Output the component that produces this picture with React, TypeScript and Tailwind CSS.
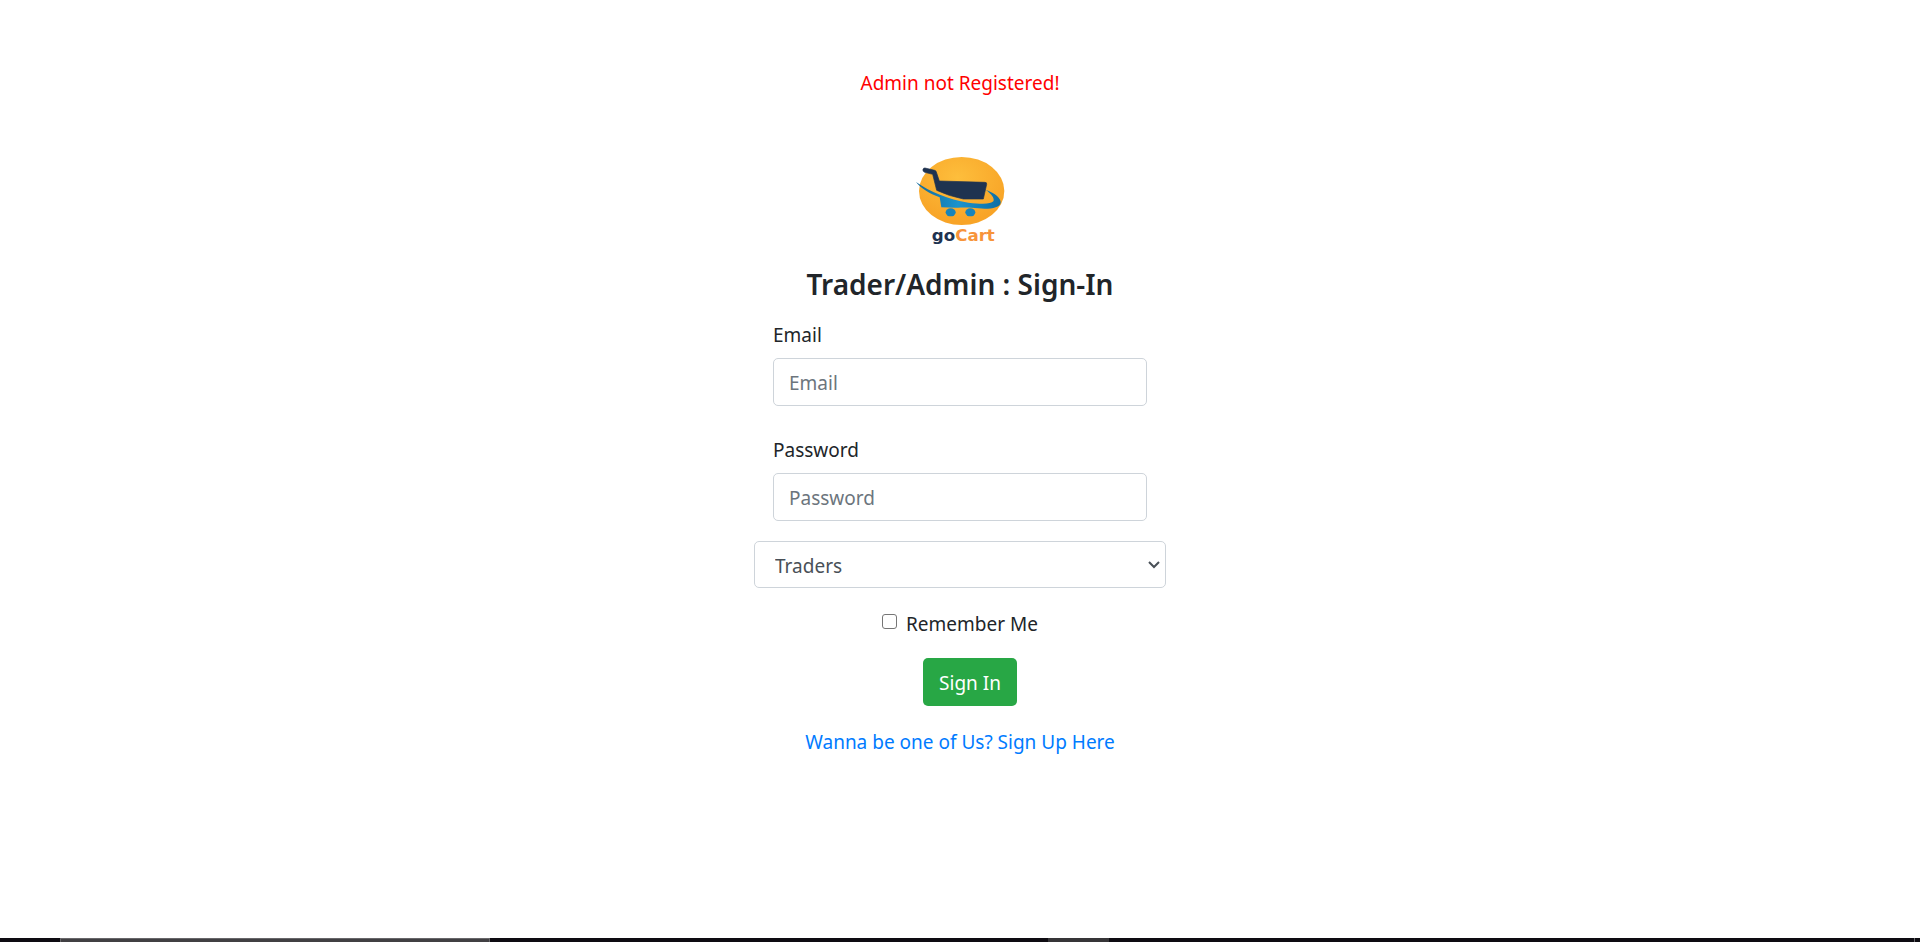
import type { ReactNode } from "react";

function Logo() {
  return (
    <svg viewBox="0 0 360 330" className="h-[110px] w-[120px]" role="img" aria-label="goCart">
      <defs>
        <radialGradient id="sun" cx="0.45" cy="0.3" r="0.65">
          <stop offset="0" stopColor="#fdbe3c" />
          <stop offset="1" stopColor="#f8a427" />
        </radialGradient>
        <linearGradient id="swoosh" x1="0" y1="0" x2="1" y2="0">
          <stop offset="0" stopColor="#126a9c" />
          <stop offset="0.5" stopColor="#1a93cd" />
          <stop offset="1" stopColor="#0d6ea5" />
        </linearGradient>
      </defs>
      <ellipse cx="185" cy="138" rx="128" ry="102" fill="url(#sun)" />
      <path
        d="M75 69 L104 76 Q108 77 109 81 L118 108 L255 112 Q261 112 260 118 L250 162 L190 162 Q145 153 110 136 L98 88 L74 82 Q67 79 69 73 Q71 68 75 69 Z"
        fill="#1f3350"
        stroke="#1f3350"
        strokeWidth="2"
      />
      <path
        d="M48 111 C90 140 145 164 205 173 C245 178 273 178 280 169 C285 160 274 147 257 134 C287 145 303 160 302 173 C300 189 268 193 235 190 C205 186 190 188 166 188 L124 187 L119 157 C88 145 62 130 48 111 Z"
        fill="url(#swoosh)"
      />
      <ellipse cx="152" cy="202" rx="15" ry="12" fill="#1684bb" />
      <ellipse cx="211" cy="202" rx="15" ry="12" fill="#1684bb" />
      <text x="190" y="289" textAnchor="middle" fontSize="50" fontWeight="700" fontFamily="DejaVu Sans, sans-serif" fill="#1f3350">
        go
        <tspan fill="#f7943a">Cart</tspan>
      </text>
    </svg>
  );
}

function Field({ id, label, children }: { id: string; label: string; children: ReactNode }) {
  return (
    <div className="flex flex-col gap-2 px-[19px]">
      <label htmlFor={id}>{label}</label>
      {children}
    </div>
  );
}

const control = "h-12 w-full rounded-[5px] border border-[#ced4da] bg-white px-[15px] pt-[2px] text-[#495057] placeholder:text-[#6c757d] placeholder:opacity-100";

export default function App() {
  return (
    <div className="flex min-h-screen flex-col bg-white font-['Noto_Sans',sans-serif] text-[19px] leading-[30px] text-[#212529]">
      <main className="mx-auto flex w-full max-w-[412px] grow flex-col items-center pt-[68px]">
        <p className="text-[#ff0000]">Admin not Registered!</p>
        <div className="mt-[47px]">
          <Logo />
        </div>
        <h1 className="mt-[11px] text-[28px] leading-9 font-semibold">Trader/Admin : Sign-In</h1>
        <form className="mt-[18px] flex w-full flex-col" onSubmit={(e) => e.preventDefault()}>
          <div className="flex flex-col gap-[29px]">
            <Field id="email" label="Email">
              <input id="email" type="email" placeholder="Email" className={control} />
            </Field>
            <Field id="password" label="Password">
              <input id="password" type="password" placeholder="Password" className={control} />
            </Field>
          </div>
          <div className="relative mt-5">
            <select
              aria-label="Account type"
              className="block h-[47px] w-full appearance-none rounded-[5px] border border-[#ced4da] bg-white px-5 pt-[2px] text-[#495057]"
            >
              <option>Traders</option>
              <option>Admin</option>
            </select>
            <svg viewBox="0 0 12 8" className="pointer-events-none absolute top-5 right-[6px] h-2 w-3" fill="none" stroke="#495057" strokeWidth="2">
              <path d="M1 1 L6 6 L11 1" />
            </svg>
          </div>
          <label className="mt-[21px] flex items-center justify-center gap-[9px]">
            <input type="checkbox" className="mb-[6px] size-[15px] appearance-none rounded-[3px] border border-[#767676] bg-white checked:bg-[#0075ff]" />
            Remember Me
          </label>
          <button type="submit" className="mt-[19px] ml-5 h-12 self-center rounded-[5px] bg-[#28a745] px-4 pt-[2px] text-white">
            Sign In
          </button>
        </form>
        <a href="#signup" className="mt-[21px] text-[#007bff]">
          Wanna be one of Us? Sign Up Here
        </a>
      </main>
      <div className="flex h-1 bg-[#0e0c12]">
        <div className="w-[60px]" />
        <div className="w-[430px] border border-b-0 border-[#68676a] bg-[#414043]" />
        <div className="grow" />
        <div className="w-[61px] bg-[#363538]" />
        <div className="w-[805px]" />
        <div className="w-px bg-[#68676a]" />
        <div className="w-[5px]" />
      </div>
    </div>
  );
}
